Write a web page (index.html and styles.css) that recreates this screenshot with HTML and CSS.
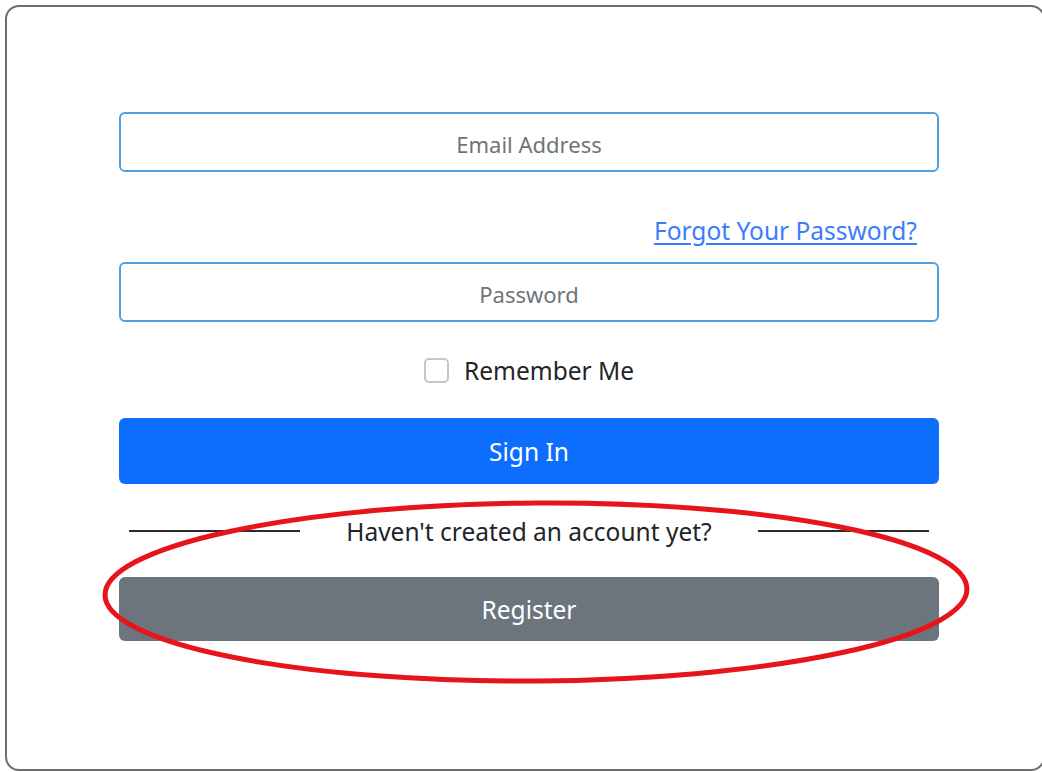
FILE: index.html
```html
<!DOCTYPE html>
<html lang="en">
<head>
<meta charset="utf-8">
<title>Sign In</title>
<link rel="stylesheet" href="styles.css">
</head>
<body>
<div class="card">
  <form class="login-form">
    <input class="field" type="email" placeholder="Email Address">
    <div class="forgot-row"><a href="#" class="forgot">Forgot Your Password?</a></div>
    <input class="field" type="password" placeholder="Password">
    <label class="remember"><input type="checkbox" class="check"><span>Remember Me</span></label>
    <button type="button" class="btn btn-primary">Sign In</button>
    <div class="divider"><span class="rule"></span><span class="divider-text">Haven't created an account yet?</span><span class="rule"></span></div>
    <button type="button" class="btn btn-secondary">Register</button>
  </form>
</div>
<svg class="highlight" width="1042" height="772" viewBox="0 0 1042 772">
  <ellipse cx="536" cy="592" rx="431" ry="89" transform="rotate(-0.4 536 592)" fill="none" stroke="#e8141c" stroke-width="5"/>
</svg>
</body>
</html>
```
FILE: styles.css
```css
html, body {
  margin: 0;
  padding: 0;
  background: #fff;
}

body {
  font-family: "Noto Sans", "Open Sans", sans-serif;
  color: #212529;
  overflow: hidden;
  width: 1042px;
  height: 772px;
}

.card {
  box-sizing: border-box;
  margin: 5px 0 0 5px;
  width: 1040px;
  height: 766px;
  border: 2px solid #6f6f6f;
  border-radius: 14px;
  padding: 105px 0 0 112px;
}

.login-form {
  width: 820px;
  display: flex;
  flex-direction: column;
}

.field {
  box-sizing: border-box;
  height: 60px;
  width: 100%;
  border: 2px solid #4da0e2;
  border-radius: 6px;
  text-align: center;
  font-family: inherit;
  font-size: 22px;
  padding-top: 4px;
  color: #212529;
  outline: none;
  background: #fff;
}

.field::placeholder {
  color: #707478;
}

.forgot-row {
  display: flex;
  justify-content: flex-end;
  padding-right: 22px;
  margin: 44px 0 16px;
  line-height: 30px;
}

.forgot {
  color: #3b7cfd;
  font-size: 24.5px;
  text-decoration: underline;
  text-underline-offset: 3px;
}

.remember {
  display: flex;
  align-items: center;
  justify-content: center;
  gap: 15px;
  margin-top: 31px;
  height: 34px;
  font-size: 24.5px;
}

.check {
  appearance: none;
  margin: 0;
  width: 25px;
  height: 25px;
  border: 2px solid #c4c6c8;
  border-radius: 5px;
  background: #fff;
}

.btn {
  box-sizing: border-box;
  width: 100%;
  border: 0;
  border-radius: 6px;
  color: #fff;
  font-family: inherit;
  font-size: 24.5px;
}

.btn-primary {
  margin-top: 31px;
  height: 66px;
  background: #0d6efd;
}

.divider {
  display: grid;
  grid-template-columns: 171px 1fr 171px;
  align-items: center;
  padding: 0 10px;
  margin-top: 30px;
  height: 34px;
  font-size: 24.5px;
}

.divider-text {
  text-align: center;
}

.rule {
  height: 2px;
  background: #2b2b2b;
}

.btn-secondary {
  margin-top: 29px;
  height: 64px;
  background: #6c757d;
}

.highlight {
  position: absolute;
  left: 0;
  top: 0;
  pointer-events: none;
}
```
